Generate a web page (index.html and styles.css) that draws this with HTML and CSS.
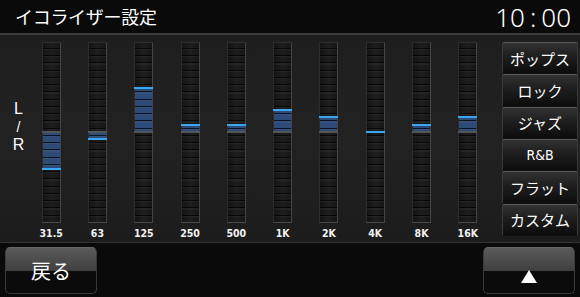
FILE: index.html
```html
<!DOCTYPE html>
<html lang="ja">
<head>
<meta charset="utf-8">
<title>イコライザー設定</title>
<link rel="stylesheet" href="styles.css">
</head>
<body>
<div class="screen">
  <header class="header">
    <div class="title">イコライザー設定</div>
    <div class="clock">10<span class="colon">:</span>00</div>
  </header>
  <main class="main">
    <div class="lr"><span>L</span><span class="slash">/</span><span>R</span></div>
    <div class="bands">
      <div class="band"><div class="track"><div class="fill" style="top:89px;height:37px"></div><div class="zero"></div><div class="level" style="top:125px"></div></div><div class="label">31.5</div></div>
      <div class="band"><div class="track"><div class="fill" style="top:89px;height:7px"></div><div class="zero"></div><div class="level" style="top:95px"></div></div><div class="label">63</div></div>
      <div class="band"><div class="track"><div class="fill" style="top:45px;height:44px"></div><div class="zero"></div><div class="level" style="top:44px"></div></div><div class="label">125</div></div>
      <div class="band"><div class="track"><div class="fill" style="top:82px;height:7px"></div><div class="zero"></div><div class="level" style="top:81px"></div></div><div class="label">250</div></div>
      <div class="band"><div class="track"><div class="fill" style="top:82px;height:7px"></div><div class="zero"></div><div class="level" style="top:81px"></div></div><div class="label">500</div></div>
      <div class="band"><div class="track"><div class="fill" style="top:67px;height:22px"></div><div class="zero"></div><div class="level" style="top:66px"></div></div><div class="label">1K</div></div>
      <div class="band"><div class="track"><div class="fill" style="top:74px;height:15px"></div><div class="zero"></div><div class="level" style="top:73px"></div></div><div class="label">2K</div></div>
      <div class="band"><div class="track"><div class="zero"></div><div class="level" style="top:88px"></div></div><div class="label">4K</div></div>
      <div class="band"><div class="track"><div class="fill" style="top:82px;height:7px"></div><div class="zero"></div><div class="level" style="top:81px"></div></div><div class="label">8K</div></div>
      <div class="band"><div class="track"><div class="fill" style="top:74px;height:15px"></div><div class="zero"></div><div class="level" style="top:73px"></div></div><div class="label">16K</div></div>
    </div>
    <nav class="presets">
      <button class="preset">ポップス</button>
      <button class="preset">ロック</button>
      <button class="preset">ジャズ</button>
      <button class="preset rb">R&amp;B</button>
      <button class="preset">フラット</button>
      <button class="preset">カスタム</button>
    </nav>
  </main>
  <footer class="footer">
    <button class="fbtn back">戻る</button>
    <button class="fbtn up"><span class="tri"></span></button>
  </footer>
</div>
</body>
</html>
```
FILE: styles.css
```css
* { box-sizing: border-box; }
html, body { margin: 0; padding: 0; background: #080808; }
body { font-family: "Noto Sans CJK JP", "Noto Sans", sans-serif; color: #fff; }
.screen { width: 580px; height: 297px; display: flex; flex-direction: column; overflow: hidden; }

.header {
  height: 35px;
  background: #0a0a0a;
  border-bottom: 2px solid #3c3c3c;
  display: flex;
  align-items: center;
  justify-content: space-between;
  padding: 0 9px 0 15px;
}
.title { font-size: 18px; line-height: 26px; letter-spacing: -0.3px; margin-top: -2px; }
.clock { font-family: "Noto Sans", sans-serif; font-weight: 300; font-size: 26px; line-height: 30px; }
.colon { padding: 0 5px; }

.main {
  height: 208px;
  background: linear-gradient(180deg, #1e1e1e 0%, #222 50%, #1c1c1c 100%);
  border-bottom: 1px solid #333;
  display: flex;
  padding-top: 7px;
}
.lr {
  width: 28px;
  padding-left: 9px;
  display: flex;
  flex-direction: column;
  align-items: center;
  justify-content: center;
  gap: 2px;
  padding-bottom: 30px;
  font-family: "Liberation Sans", sans-serif;
  font-size: 16px;
  line-height: 16px;
}
.lr .slash { font-size: 14px; }

.bands { width: 463px; display: grid; grid-template-columns: repeat(10, 1fr); }
.band { display: flex; flex-direction: column; align-items: center; }
.track {
  position: relative;
  width: 19px;
  height: 181px;
  background: linear-gradient(90deg, #141414, #1e1e1e 50%, #161616);
  border: 1px solid #2c2c2c;
  border-right-color: #444;
  border-bottom-color: #4a4a4a;
}
.track::after {
  content: "";
  position: absolute;
  inset: 0;
  background: repeating-linear-gradient(180deg, transparent 0, transparent 5px, rgba(0,0,0,0.75) 5px, rgba(0,0,0,0.75) 6px, rgba(255,255,255,0.04) 6px, rgba(255,255,255,0.04) 7.24px);
  z-index: 2;
}
.fill { position: absolute; left: 0; right: 0; background: #2e4a78; z-index: 1; }
.zero { position: absolute; left: -1px; right: -1px; top: 88px; height: 2px; background: #555; z-index: 3; }
.level { position: absolute; left: -1px; right: -1px; height: 2px; background: #3aa6f0; z-index: 4; }
.label {
  margin-top: 4px;
  font-family: "DejaVu Sans Condensed", "DejaVu Sans", sans-serif;
  font-weight: bold;
  font-size: 10.5px;
  line-height: 12px;
  color: #f2f2f2;
}

.presets { margin-left: 11px; width: 76px; display: flex; flex-direction: column; padding-bottom: 6px; }
.preset {
  height: 32.4px;
  background: linear-gradient(180deg, #323232 0%, #1e1e1e 45%, #0c0c0c 100%);
  border: 1px solid #3a3a3a;
  border-top-color: #5a5a5a;
  border-bottom-color: #111;
  border-radius: 2px;
  color: #fff;
  font-family: "Noto Sans CJK JP", sans-serif;
  font-size: 15px;
  padding: 0;
  display: flex;
  align-items: center;
  justify-content: center;
}
.preset.rb { font-family: "DejaVu Sans Condensed", sans-serif; font-size: 14px; }

.footer {
  flex: 1;
  background: #0a0a0a;
  display: flex;
  justify-content: space-between;
  align-items: flex-start;
  padding: 4px 5px 0 5px;
}
.fbtn {
  width: 92px;
  height: 47px;
  border: 1px solid #3a3a3a;
  border-top-color: #666;
  border-radius: 5px;
  background: linear-gradient(180deg, #5a5a5a 0%, #404040 50%, #0c0c0c 51%, #0a0a0a 100%);
  color: #fff;
  padding: 0;
  display: flex;
  align-items: center;
  justify-content: center;
}
.back { font-family: "Noto Sans CJK JP", sans-serif; font-size: 20px; }
.up .tri { width: 0; height: 0; border-left: 8px solid transparent; border-right: 8px solid transparent; border-bottom: 13px solid #fff; margin-top: 12px; }
```
